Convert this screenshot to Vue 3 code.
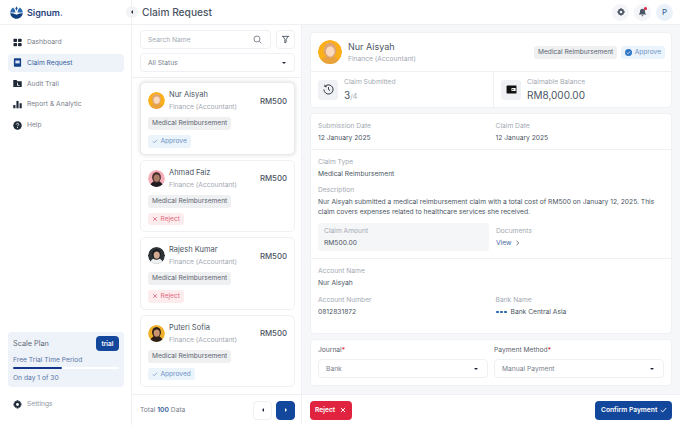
<template>
  <div class="app">
    <aside class="sidebar">
      <div class="brand">
        <svg width="13" height="13" viewBox="0 0 13 13">
          <path d="M6.5 .3l1.100 2.200-1.100 2.200-1.100-2.200z" fill="#1d4f91" />
          <path d="M3.200 1.400l1.500 2.200.9 2.800H.2C.4 4.300 1.500 2.400 3.200 1.400z" fill="#2a6bb0" />
          <path d="M9.800 1.400L8.300 3.600l-.9 2.800h5.400c-.2-2.100-1.300-4-3-5z" fill="#2a6bb0" />
          <path d="M.2 7.200c2 0 4.200.3 6.300 1.600 2.100-1.300 4.300-1.600 6.300-1.600-.4 3-3 5.500-6.300 5.600C3.200 12.700.6 10.200.2 7.200z" fill="#123f7d" />
        </svg>
        <span>Signum<i>.</i></span>
      </div>
      <nav class="nav">
        <a v-for="item in navItems" :key="item.label" class="nav-item" :class="{ active: item.active }">
          <svg width="9" height="9" viewBox="0 0 10 10" v-html="item.icon"></svg>
          {{ item.label }}
        </a>
      </nav>
      <div class="plan">
        <div class="plan-head">
          <span>Scale Plan</span>
          <b>trial</b>
        </div>
        <p>Free Trial Time Period</p>
        <div class="track"><div class="fill" :style="{ width: '46%' }"></div></div>
        <p>On day 1 of 30</p>
      </div>
      <a class="nav-item settings">
        <svg width="9" height="9" viewBox="0 0 10 10" v-html="gear"></svg>
        Settings
      </a>
    </aside>

    <div class="main">
      <header class="topbar">
        <button class="collapse"><i class="tri-left"></i></button>
        <h1>Claim Request</h1>
        <div class="top-actions">
          <span class="round"><svg width="8" height="8" viewBox="0 0 10 10" v-html="gearGrey"></svg></span>
          <span class="round bell">
            <svg width="9" height="9" viewBox="0 0 10 10"><path d="M5 .8C3.300.8 2.200 2 2.200 3.800c0 2-.9 2.600-1.400 3.400h8.400c-.5-.8-1.400-1.400-1.400-3.400C7.800 2 6.700.8 5 .8zM4 8h2c0 .7-.4 1.200-1 1.200S4 8.700 4 8z" fill="#4b5563" /></svg>
            <i></i>
          </span>
          <span class="round profile">P</span>
        </div>
      </header>

      <div class="content">
        <section class="list-col">
          <div class="filters">
            <div class="filter-row">
              <div class="field search">
                <span>Search Name</span>
                <svg width="9" height="9" viewBox="0 0 10 10" fill="none" stroke="#6b7280" stroke-width=".9"><circle cx="4.400" cy="4.400" r="3.300" /><path d="M7 7l2.200 2.200" /></svg>
              </div>
              <div class="field filter-btn">
                <svg width="9" height="9" viewBox="0 0 10 10" fill="none" stroke="#374151" stroke-width=".9"><path d="M1 1.500h8M2.300 1.500L4.300 5v3.800l1.400-.8V5l2-3.500" /></svg>
              </div>
            </div>
            <div class="field status">
              <span>All Status</span>
              <i class="tri-down"></i>
            </div>
          </div>
          <div class="claims">
            <article v-for="c in claims" :key="c.name" class="claim" :class="{ selected: c.selected }">
              <div class="claim-head">
                <svg class="avatar" width="17" height="17" viewBox="0 0 44 44" v-html="c.avatar"></svg>
                <div class="claim-who">
                  <strong>{{ c.name }}</strong>
                  <small>Finance (Accountant)</small>
                </div>
                <span class="amount">RM500</span>
              </div>
              <span class="tag">Medical Reimbursement</span>
              <span class="state" :class="c.kind">
                <svg v-if="c.kind === 'ok'" width="6" height="6" viewBox="0 0 10 10" fill="none" stroke="currentColor" stroke-width="1.200"><path d="M1.500 5.500l2.300 2.300 4.700-5" /></svg>
                <svg v-else width="6" height="6" viewBox="0 0 10 10" fill="none" stroke="currentColor" stroke-width="1.400"><path d="M2 2l6 6M8 2l-6 6" /></svg>
                {{ c.state }}
              </span>
            </article>
          </div>
          <div class="list-foot">
            <span>Total <b>100</b> Data</span>
            <div class="pager">
              <button><i class="tri-left"></i></button>
              <button class="next"><i class="tri-right"></i></button>
            </div>
          </div>
        </section>

        <section class="detail-col">
          <div class="detail-scroll">
            <div class="card">
              <div class="person">
                <svg class="avatar" width="24" height="24" viewBox="0 0 44 44" v-html="claims[0].avatar"></svg>
                <div class="person-name">
                  <strong>Nur Aisyah</strong>
                  <small>Finance (Accountant)</small>
                </div>
                <span class="tag">Medical Reimbursement</span>
                <span class="state ok approve">
                  <svg width="7" height="7" viewBox="0 0 10 10"><circle cx="5" cy="5" r="5" fill="#2f77c4" /><path d="M2.700 5.200l1.600 1.600 3-3.200" fill="none" stroke="#fff" stroke-width="1.100" /></svg>
                  Approve
                </span>
              </div>
              <div class="stats">
                <div class="stat">
                  <span class="stat-icon">
                    <svg width="11" height="11" viewBox="0 0 12 12" fill="none" stroke="#1f2937" stroke-width="1"><path d="M2.300 2.600A5 5 0 1 1 1 6" /><path d="M2 .9v2h2M6 3.400V6l1.800 1.200" /></svg>
                  </span>
                  <div>
                    <small>Claim Submitted</small>
                    <strong>3<em>/4</em></strong>
                  </div>
                </div>
                <div class="stat">
                  <span class="stat-icon">
                    <svg width="11" height="9" viewBox="0 0 12 10"><path d="M.5 1.500A1 1 0 0 1 1.500.5h10v9h-10a1 1 0 0 1-1-1z" fill="#111" /><rect x="6" y="3.200" width="4.600" height="3.600" rx=".6" fill="#fff" /><circle cx="7.600" cy="5" r=".8" fill="#111" /></svg>
                  </span>
                  <div>
                    <small>Claimable Balance</small>
                    <strong>RM8,000.00</strong>
                  </div>
                </div>
              </div>
            </div>

            <div class="card info">
              <div class="info-block dates">
                <div class="kv"><small>Submission Date</small><span>12 January 2025</span></div>
                <div class="kv"><small>Claim Date</small><span>12 January 2025</span></div>
              </div>
              <div class="info-block claim-info">
                <div class="kv"><small>Claim Type</small><span>Medical Reimbursement</span></div>
                <div class="kv desc">
                  <small>Description</small>
                  <span>Nur Aisyah submitted a medical reimbursement claim with a total cost of RM500 on January 12, 2025. This claim covers expenses related to healthcare services she received.</span>
                </div>
                <div class="amount-row">
                  <div class="kv amount-box"><small>Claim Amount</small><span>RM500.00</span></div>
                  <div class="kv docs">
                    <small>Documents</small>
                    <a>View
                      <svg width="5" height="6" viewBox="0 0 5 6" fill="none" stroke="#4b5563" stroke-width=".8"><path d="M1.500 .8L3.800 3 1.500 5.200" /></svg>
                    </a>
                  </div>
                </div>
              </div>
              <div class="info-block account">
                <div class="kv"><small>Account Name</small><span>Nur Aisyah</span></div>
                <div class="bank-row">
                  <div class="kv"><small>Account Number</small><span>0812831872</span></div>
                  <div class="kv">
                    <small>Bank Name</small>
                    <span class="bank">
                      <i class="bca"><b></b><b></b><b></b></i>
                      Bank Central Asia
                    </span>
                  </div>
                </div>
              </div>
            </div>

            <div class="card form">
              <label class="form-field">
                <span>Journal<em>*</em></span>
                <div class="field select"><span>Bank</span><i class="tri-down"></i></div>
              </label>
              <label class="form-field">
                <span>Payment Method<em>*</em></span>
                <div class="field select"><span>Manual Payment</span><i class="tri-down"></i></div>
              </label>
            </div>
          </div>
          <div class="actions">
            <button class="btn reject">Reject
              <svg width="6" height="6" viewBox="0 0 10 10" fill="none" stroke="#fff" stroke-width="1.600"><path d="M1.500 1.500l7 7M8.500 1.500l-7 7" /></svg>
            </button>
            <button class="btn confirm">Confirm Payment
              <svg width="7" height="6" viewBox="0 0 10 9" fill="none" stroke="#fff" stroke-width="1.400"><path d="M1 4.800l2.700 2.600L9 1.600" /></svg>
            </button>
          </div>
        </section>
      </div>
    </div>
  </div>
</template>

<script setup>
const gearPath = 'M4 .3h2l.3 1.300 1-.5 1.400 1.400-.6 1 1.400.4v2l-1.400.4.6 1-1.400 1.400-1-.6-.3 1.400H4l-.3-1.400-1 .6L1.300 7.300l.6-1L.5 6V4l1.400-.4-.6-1 1.400-1.400 1 .5zM5 3.400a1.600 1.600 0 1 0 0 3.200 1.600 1.600 0 0 0 0-3.200z'
const gear = `<path fill="#1f2937" fill-rule="evenodd" d="${gearPath}"/>`
const gearGrey = `<path fill="#4b5563" fill-rule="evenodd" d="${gearPath}"/>`

const navItems = [
  { label: 'Dashboard', icon: '<g fill="#1f2937"><rect x=".5" y=".8" width="4" height="3.600" rx=".8"/><rect x="5.600" y=".8" width="4" height="3.600" rx=".8"/><rect x=".5" y="5.600" width="4" height="3.600" rx=".8"/><rect x="5.600" y="5.600" width="4" height="3.600" rx=".8"/></g>' },
  { label: 'Claim Request', active: true, icon: '<rect x="1" y=".3" width="8" height="9.400" rx=".8" fill="#12408a"/><rect x="2.600" y="2.800" width="4.800" height="3.200" fill="#dbe6f4"/>' },
  { label: 'Audit Trail', icon: '<path d="M.3 1.200h3.600l1 1.200h4.800v6.600H.3z" fill="#1f2937"/><path d="M5 4.200v3h2.200" stroke="#fff" stroke-width=".9" fill="none"/>' },
  { label: 'Report & Analytic', icon: '<g fill="#1f2937"><rect x=".3" y="5.600" width="2.400" height="3.600"/><rect x="3.800" y="1" width="2.400" height="8.200"/><rect x="7.300" y="3.600" width="2.400" height="5.600"/></g>' },
  { label: 'Help', icon: '<circle cx="5" cy="5" r="4.700" fill="#1f2937"/><path d="M3.600 3.900C3.700 3 4.300 2.600 5 2.600c.9 0 1.400.6 1.400 1.200 0 1-1.400 1-1.400 2.100" stroke="#fff" stroke-width=".9" fill="none"/><circle cx="5" cy="7.300" r=".6" fill="#fff"/>' },
]

const face = (bg, wrap, skin, cloth) =>
  `<circle cx="22" cy="22" r="22" fill="${bg}"/><path d="M6 44c0-10 5-15 16-15s16 5 16 15z" fill="${cloth}"/><ellipse cx="22" cy="19" rx="11.500" ry="14" fill="${wrap}"/><ellipse cx="22.500" cy="21" rx="8" ry="9.500" fill="${skin}"/>`

const claims = [
  { name: 'Nur Aisyah', kind: 'ok', state: 'Approve', selected: true, avatar: face('#fbb01a', '#dca478', '#fbd9bd', '#e9a23c') },
  { name: 'Ahmad Faiz', kind: 'no', state: 'Reject', avatar: face('#f6adb8', '#4a3230', '#a97a66', '#201a22') },
  { name: 'Rajesh Kumar', kind: 'no', state: 'Reject', avatar: face('#2e3338', '#1b1d20', '#d3aa92', '#eef0f2') },
  { name: 'Puteri Sofia', kind: 'ok', state: 'Approved', avatar: face('#eeb02b', '#2c1e18', '#c9936f', '#2c1e18') },
]
</script>

<style>
html, body { margin: 0; background: #fff; }
</style>

<style scoped>
* { box-sizing: border-box; }
.app {
  display: grid;
  grid-template-columns: 132px 1fr;
  width: 680px;
  height: 425px;
  overflow: hidden;
  font-family: Inter, "Liberation Sans", sans-serif;
  color: #4b5563;
  font-size: 6.7px;
}
small { font-size: 6.7px; color: #a3a9b2; display: block; }
p { margin: 0; }

/* sidebar */
.sidebar {
  display: flex;
  flex-direction: column;
  border-right: 1px solid #eef0f3;
  min-height: 0;
}
.brand {
  display: flex;
  align-items: center;
  gap: 4px;
  height: 25px;
  padding: 0 10px;
  border-bottom: 1px solid #eef0f3;
  font-size: 9px;
  font-weight: 600;
  color: #1f3f7a;
}
.brand i { font-style: normal; color: #6b7fa8; }
.nav {
  display: flex;
  flex-direction: column;
  gap: 2.8px;
  padding: 8px 7px 0 8px;
  flex: 1;
}
.nav-item {
  display: flex;
  align-items: center;
  gap: 5px;
  height: 18px;
  padding: 0 5px;
  border-radius: 4px;
  font-size: 6.7px;
  color: #7a818c;
}
.nav-item.active { background: #eef3f9; color: #2f5a9a; }
.plan {
  margin: 0 7px 0 8px;
  padding: 4px 5px 6px;
  height: 55px;
  background: #eef3f9;
  border-radius: 4px;
  font-size: 6.7px;
  color: #5a75a6;
}
.plan-head {
  display: flex;
  justify-content: space-between;
  align-items: center;
  font-size: 7.3px;
  color: #5b6470;
  margin-bottom: 5px;
}
.plan-head b {
  background: #12479b;
  color: #fff;
  font-size: 6.5px;
  font-weight: 600;
  padding: 3.5px 5.5px;
  border-radius: 4px;
}
.track { height: 2px; background: #fff; margin: 3px 0 5px; border-radius: 1px; }
.fill { height: 100%; background: #12358c; border-radius: 1px; }
.settings { margin: 8px 8px 12px; height: 18px; color: #9198a2; }

/* top */
.main { display: flex; flex-direction: column; min-width: 0; }
.topbar {
  position: relative;
  display: flex;
  align-items: center;
  justify-content: space-between;
  height: 25px;
  padding: 0 7px 0 10px;
  border-bottom: 1px solid #eef0f3;
  flex: none;
}
.topbar h1 { margin: 0; font-size: 10.2px; font-weight: 500; color: #4b5563; }
.collapse {
  position: absolute;
  left: -6px;
  top: 6px;
  width: 12px;
  height: 12px;
  padding: 0;
  display: flex;
  align-items: center;
  justify-content: center;
  border: 0;
  border-radius: 50%;
  background: #f1f3f5;
}
.top-actions { display: flex; gap: 5px; }
.round {
  position: relative;
  width: 17px;
  height: 17px;
  display: flex;
  align-items: center;
  justify-content: center;
  border-radius: 50%;
  background: #f3f5f8;
}
.bell i {
  position: absolute;
  top: 3px;
  right: 4px;
  width: 3px;
  height: 3px;
  border-radius: 50%;
  background: #e21d3c;
}
.profile { background: #eaf1f9; color: #2f5a9a; font-size: 8px; }
.tri-left, .tri-right, .tri-down { display: block; width: 0; height: 0; border-style: solid; }
.tri-left { border-width: 2px 2.5px 2px 0; border-color: transparent #1f2937 transparent transparent; }
.tri-right { border-width: 2px 0 2px 2.5px; border-color: transparent transparent transparent #fff; }
.tri-down { border-width: 2.5px 2px 0; border-color: #1f2937 transparent transparent; }

/* list */
.content { display: grid; grid-template-columns: 170px 1fr; flex: 1; min-height: 0; }
.list-col { display: flex; flex-direction: column; border-right: 1px solid #eef0f3; min-height: 0; }
.filters {
  display: flex;
  flex-direction: column;
  gap: 4px;
  padding: 5px 6px 5px 8px;
  border-bottom: 1px solid #eef0f3;
  height: 53px;
}
.filter-row { display: flex; gap: 5px; }
.field {
  display: flex;
  align-items: center;
  justify-content: space-between;
  height: 19px;
  padding: 0 8px 0 7px;
  border: 1px solid #eef0f3;
  border-radius: 4px;
  background: #fff;
  color: #7a818c;
}
.search { flex: 1; color: #a3a9b2; }
.filter-btn { width: 19px; padding: 0; justify-content: center; }
.claims {
  flex: 1;
  display: flex;
  flex-direction: column;
  gap: 5px;
  padding: 4px 6px 0 8px;
  overflow: hidden;
}
.claim {
  flex: none;
  display: flex;
  flex-direction: column;
  align-items: flex-start;
  height: 72.5px;
  padding: 7px 7px 6px;
  border: 1px solid #eef0f3;
  border-radius: 5px;
  background: #fff;
}
.claim.selected { box-shadow: 0 0 4px rgba(17, 24, 39, .16); border-color: #e8eaee; }
.claim-head { display: flex; align-items: center; gap: 4px; width: 100%; margin-bottom: 6px; }
.claim-who { flex: 1; }
.claim-who strong { display: block; font-size: 7.5px; font-weight: 400; color: #4b5563; margin-bottom: 4px; }
.amount { font-size: 7.8px; font-weight: 500; color: #4b5563; }
.avatar { flex: none; border-radius: 50%; }
.tag {
  display: inline-block;
  height: 13px;
  line-height: 13px;
  padding: 0 4px;
  background: #eff0f2;
  border-radius: 3px;
  font-size: 6.6px;
  color: #5b6470;
  white-space: nowrap;
}
.state {
  display: inline-flex;
  align-items: center;
  gap: 2.5px;
  height: 13px;
  margin-top: 5px;
  padding: 0 4px;
  border-radius: 3px;
  font-size: 6.6px;
  white-space: nowrap;
}
.state.ok { background: #ebf3fb; color: #6a92c6; }
.state.no { background: #fdecee; color: #e0667a; }
.list-foot {
  flex: none;
  display: flex;
  align-items: center;
  justify-content: space-between;
  height: 31px;
  padding: 0 6px 0 8px;
  border-top: 1px solid #eef0f3;
  color: #7a818c;
}
.list-foot b { color: #2f5a9a; font-weight: 600; }
.pager { display: flex; gap: 4px; }
.pager button {
  width: 19px;
  height: 19px;
  padding: 0;
  display: flex;
  align-items: center;
  justify-content: center;
  border: 1px solid #eef0f3;
  border-radius: 4px;
  background: #fff;
}
.pager .next { background: #12479b; border-color: #12479b; }

/* detail */
.detail-col { display: flex; flex-direction: column; min-height: 0; min-width: 0; }
.detail-scroll {
  flex: 1;
  display: flex;
  flex-direction: column;
  gap: 5.5px;
  padding: 7px 8px 0;
  background: #f6f7f9;
  overflow: hidden;
}
.card { flex: none; background: #fff; border-radius: 4px; border: 1px solid #f0f1f4; }
.person { display: flex; align-items: center; gap: 6px; height: 39px; padding: 0 6px 0 7px; border-bottom: 1px solid #eef0f3; }
.person-name { flex: 1; }
.person-name strong { display: block; font-size: 9px; font-weight: 400; margin-bottom: 3px; margin-top: -1px; }
.person .tag { height: 13px; }
.person .state { margin: 0 0 0 -2px; }
.approve { gap: 2.5px; padding: 0 4px; }
.stats { display: grid; grid-template-columns: 182px 1fr; height: 35px; }
.stat { display: flex; align-items: center; gap: 6px; padding: 0 7px; }
.stat + .stat { border-left: 1px solid #eef0f3; }
.stat-icon {
  width: 20px;
  height: 20px;
  display: flex;
  align-items: center;
  justify-content: center;
  border-radius: 3px;
  background: #f0f1f4;
}
.stat strong { display: block; font-size: 10px; font-weight: 400; margin-top: 3px; color: #4b5563; }
.stat em { font-style: normal; font-size: 7px; color: #a3a9b2; }
.info { display: flex; flex-direction: column; height: 221px; margin-top: -1px; }
.info-block { padding: 0 7px; }
.info-block + .info-block { border-top: 1px solid #eef0f3; }
.kv small { margin-bottom: 3px; line-height: 9px; }
.kv span { display: block; color: #4b5563; line-height: 9px; }
.dates { display: grid; grid-template-columns: 177.5px 1fr; height: 35px; padding-top: 8px; }
.claim-info { height: 109px; padding-top: 8px; }
.desc { margin-top: 7px; }
.desc small { margin-bottom: 2px; }
.desc span { line-height: 10px; }
.amount-row { display: grid; grid-template-columns: 171px 1fr; gap: 7px; margin-top: 6px; }
.amount-box { background: #f5f6f8; border-radius: 3px; padding: 4px 6px; height: 28px; }
.docs { padding-top: 4px; }
.docs a { display: flex; align-items: center; gap: 4px; color: #45689f; height: 9px; }
.account { flex: 1; padding-top: 8px; }
.bank-row { display: grid; grid-template-columns: 177.5px 1fr; margin-top: 8px; }
.bank { display: flex !important; align-items: center; gap: 4px; margin-top: 1px; }
.bca { display: flex; gap: 1px; width: 11px; align-items: center; }
.bca b { flex: 1; height: 2px; border-radius: 1px; background: #1f5ea8; }
.form { display: grid; grid-template-columns: 1fr 1fr; gap: 6px; height: 47px; padding: 6px 7px; }
.form-field > span { display: block; margin-bottom: 5px; color: #5b6470; }
.form-field em { font-style: normal; color: #e21d3c; }
.select { padding: 0 9px 0 7px; height: 19px; }
.actions {
  flex: none;
  display: flex;
  align-items: center;
  justify-content: space-between;
  height: 31px;
  padding: 0 8px;
  background: #fff;
  border-top: 1px solid #f0f1f4;
}
.btn {
  display: flex;
  align-items: center;
  height: 19px;
  border: 0;
  border-radius: 4px;
  color: #fff;
  white-space: nowrap;
  font: 600 6.7px Inter, "Liberation Sans", sans-serif;
}
.btn svg { flex: none; }
.reject { width: 42px; padding: 0 5px; gap: 5px; background: #e0233f; }
.confirm { width: 77px; padding: 0 5px 0 6px; gap: 3px; justify-content: space-between; background: #12479b; }
</style>
